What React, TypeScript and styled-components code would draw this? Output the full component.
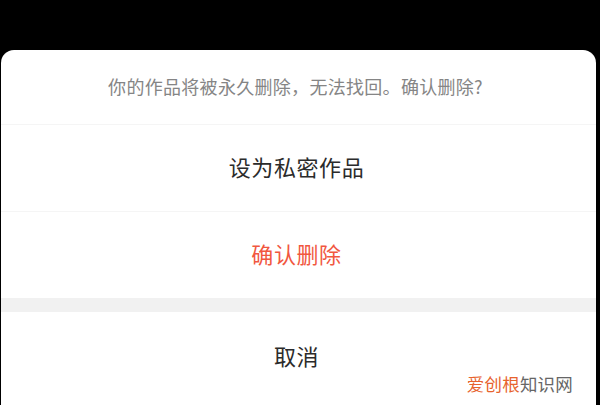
import React from "react";
import styled, { createGlobalStyle } from "styled-components";

const Global = createGlobalStyle`
  html, body { margin: 0; padding: 0; background: #000; }
  body { width: 600px; height: 405px; overflow: hidden; font-family: "Noto Sans CJK SC", "Noto Sans", sans-serif; }
`;

const Screen = styled.div`
  width: 600px;
  height: 405px;
  background: #000;
  display: flex;
  flex-direction: column;
  padding-top: 50px;
  box-sizing: border-box;
  position: relative;
  overflow: hidden;
`;

const Sheet = styled.div`
  flex: 1;
  margin: 0 4px 0 1px;
  background: #fff;
  border-radius: 13px 13px 0 0;
  display: flex;
  flex-direction: column;
  overflow: hidden;
`;

const Header = styled.div`
  height: 75px;
  box-sizing: border-box;
  padding: 0 6px 2px 0;
  display: flex;
  align-items: center;
  justify-content: center;
  font-size: 18px;
  letter-spacing: 0.3px;
  color: #858585;
  border-bottom: 1px solid #f5f5f5;
`;

const Row = styled.div<{ $danger?: boolean; $h: number; $line?: boolean }>`
  height: ${(p) => p.$h}px;
  box-sizing: border-box;
  flex-shrink: 0;
  display: flex;
  align-items: center;
  justify-content: center;
  padding: 0 4px 5px 0;
  font-size: 22px;
  letter-spacing: 0.6px;
  color: ${(p) => (p.$danger ? "#f1573f" : "#2b2b2b")};
  border-bottom: ${(p) => (p.$line ? "1px solid #f5f5f5" : "none")};
`;

const Gap = styled.div`
  height: 14px;
  flex-shrink: 0;
  background: #f1f1f1;
`;

const Watermark = styled.div`
  position: absolute;
  right: 27px;
  bottom: 9px;
  font-size: 17.5px;
  color: #666;
  letter-spacing: 0.2px;
`;

const Brand = styled.span`
  color: #e7632e;
`;

export default function App() {
  return (
    <>
      <Global />
      <Screen>
        <Sheet>
          <Header>你的作品将被永久删除，无法找回。确认删除?</Header>
          <Row $h={87} $line>设为私密作品</Row>
          <Row $h={86} $danger>确认删除</Row>
          <Gap />
          <Row $h={90}>取消</Row>
        </Sheet>
        <Watermark>
          <Brand>爱创根</Brand>知识网
        </Watermark>
      </Screen>
    </>
  );
}
